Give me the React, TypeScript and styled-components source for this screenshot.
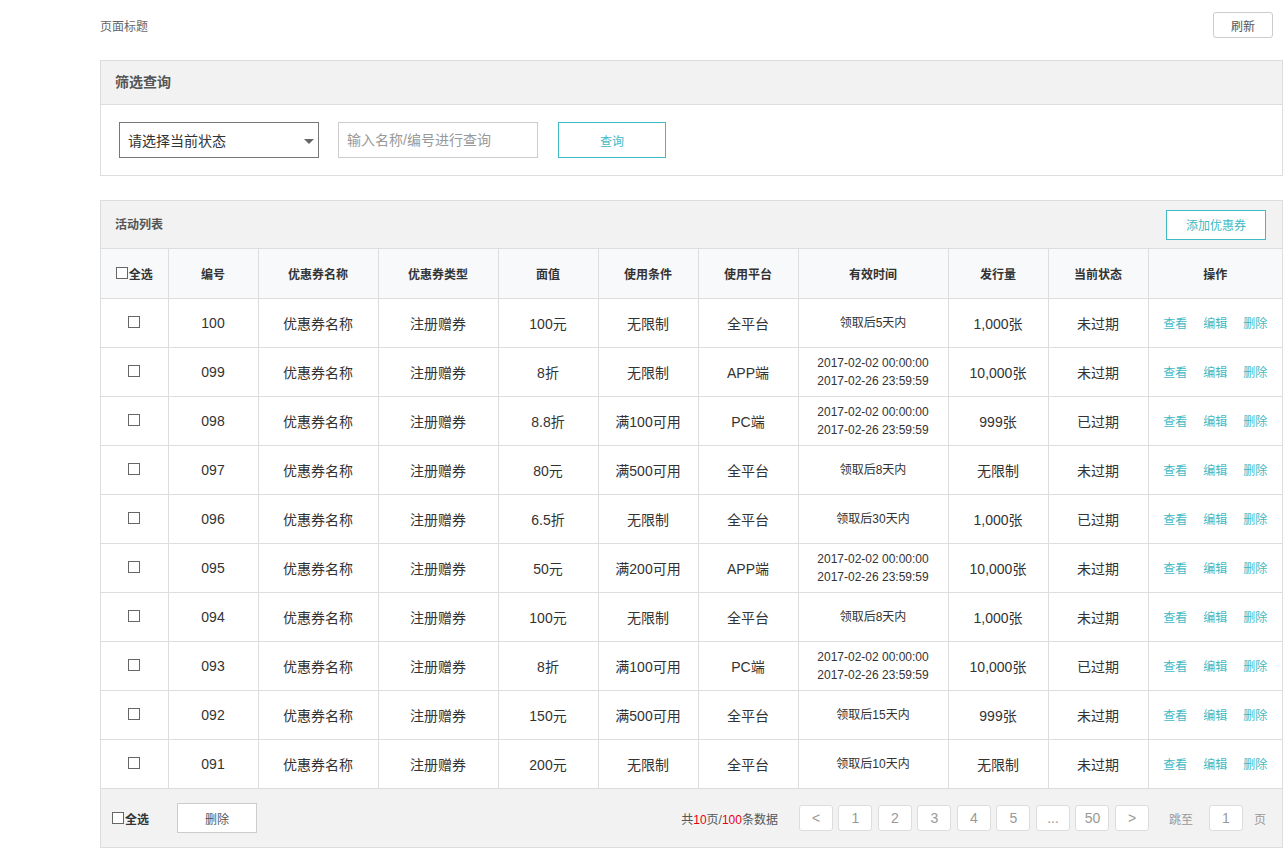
import styled, {createGlobalStyle} from "styled-components";

const TEAL = '#3fbac4'

const GlobalStyle = createGlobalStyle`
  html, body {
    margin: 0;
    padding: 0;
    background: #fff;
  }
  body {
    font-family: "Liberation Sans", "Noto Sans CJK SC", sans-serif;
    color: #333;
  }
  * {
    box-sizing: border-box;
  }
`

const Page = styled.div`
  width: 1283px;
  padding-left: 100px;
`
const TopBar = styled.div`
  display: flex;
  align-items: center;
  justify-content: space-between;
  height: 50px;
  margin-bottom: 10px;
  padding-right: 10px;
`
const PageTitle = styled.div`
  font-size: 12px;
  color: #666;
`
const Button = styled.button<{ $teal?: boolean; $w: number; $h: number; $radius?: number }>`
  width: ${p => p.$w}px;
  height: ${p => p.$h}px;
  padding: 0;
  background: #fff;
  border: 1px solid ${p => p.$teal ? TEAL : '#ccc'};
  border-radius: ${p => p.$radius ?? 0}px;
  color: ${p => p.$teal ? TEAL : '#555'};
  font-family: inherit;
  font-size: 12px;
  cursor: pointer;
`
const Panel = styled.div<{ $gap?: number }>`
  border: 1px solid #ddd;
  margin-bottom: ${p => p.$gap ?? 0}px;
`
const PanelHead = styled.div<{ $h: number }>`
  display: flex;
  align-items: center;
  justify-content: space-between;
  height: ${p => p.$h}px;
  padding: 0 16px 0 14px;
  background: #f2f2f2;
  border-bottom: 1px solid #ddd;
`
const PanelTitle = styled.div<{ $size: number }>`
  font-size: ${p => p.$size}px;
  font-weight: bold;
  color: #555;
  margin-top: -3px;
`
const FilterBody = styled.div`
  display: flex;
  align-items: center;
  gap: 19px;
  padding: 17px 18px;

  button {
    margin-left: 1px;
  }
`
const SelectBox = styled.div`
  position: relative;
  display: flex;
  align-items: center;
  width: 200px;
  height: 36px;
  padding: 0 8px;
  border: 1px solid #777;
  font-size: 14px;
  color: #333;

  &::after {
    content: '';
    position: absolute;
    right: 4px;
    top: 16px;
    border-left: 5px solid transparent;
    border-right: 5px solid transparent;
    border-top: 5px solid #666;
  }
`
const TextInput = styled.input`
  width: 200px;
  height: 36px;
  padding: 0 8px;
  border: 1px solid #ccc;
  outline: none;
  font-family: inherit;
  font-size: 14px;

  &::placeholder {
    color: #999;
  }
`
const Table = styled.table`
  width: 100%;
  border-collapse: collapse;
  table-layout: fixed;
  font-size: 14px;

  th, td {
    border: 1px solid #ddd;
    text-align: center;
    padding: 0;
  }
  tr > :first-child {
    border-left: none;
  }
  tr > :last-child {
    border-right: none;
  }
  thead tr:first-child th {
    border-top: none;
  }
  tbody tr:last-child td {
    border-bottom: none;
  }
`
const HeadRow = styled.tr`
  height: 49px;
  background: #f8f9fb;

  th {
    font-size: 12px;
    font-weight: bold;
    color: #333;
  }
`
const BodyRow = styled.tr`
  height: 49px;
  color: #333;
`
const SmallCell = styled.td`
  font-size: 12px;
  line-height: 18px;
`
const Check = styled.span`
  display: inline-block;
  width: 12px;
  height: 12px;
  border: 1px solid #666;
  background: #fff;
  vertical-align: middle;
`
const CheckLabel = styled.label`
  display: inline-flex;
  align-items: center;
  gap: 1px;
  font-size: 12px;
  font-weight: bold;
  color: #333;
`
const RowCheck = styled(Check)`
  margin-top: -4px;
`
const Actions = styled.div`
  display: flex;
  justify-content: center;
  gap: 16px;
  font-size: 12px;

  a {
    color: ${TEAL};
    text-decoration: none;
  }
`
const Footer = styled.div`
  display: flex;
  align-items: center;
  height: 59px;
  padding: 0 16px 0 11px;
  background: #f2f2f2;
  border-top: 1px solid #ddd;
`
const FooterLeft = styled.div`
  display: flex;
  align-items: center;
  gap: 28px;
`
const Pager = styled.div`
  display: flex;
  align-items: center;
  margin-left: auto;
  font-size: 12px;
  color: #999;
`
const PageInfo = styled.div`
  color: #555;
  margin-right: 21px;

  em {
    font-style: normal;
    color: #e60012;
  }
`
const PageButtons = styled.div`
  display: flex;
  gap: 5.5px;
  margin-right: 20px;
`
const PageBtn = styled.div`
  display: flex;
  align-items: center;
  justify-content: center;
  width: 34px;
  height: 26px;
  background: #fff;
  border: 1px solid #ddd;
  border-radius: 3px;
  color: #999;
  font-size: 14px;
`
const JumpInput = styled(PageBtn)`
  margin: 0 11px 0 16px;
`

type Row = {
    id: string
    value: string
    cond: string
    platform: string
    time: string | [string, string]
    amount: string
    status: string
}

const DATES: [string, string] = ['2017-02-02 00:00:00', '2017-02-26 23:59:59']

const rows: Row[] = [
    {id: '100', value: '100元', cond: '无限制', platform: '全平台', time: '领取后5天内', amount: '1,000张', status: '未过期'},
    {id: '099', value: '8折', cond: '无限制', platform: 'APP端', time: DATES, amount: '10,000张', status: '未过期'},
    {id: '098', value: '8.8折', cond: '满100可用', platform: 'PC端', time: DATES, amount: '999张', status: '已过期'},
    {id: '097', value: '80元', cond: '满500可用', platform: '全平台', time: '领取后8天内', amount: '无限制', status: '未过期'},
    {id: '096', value: '6.5折', cond: '无限制', platform: '全平台', time: '领取后30天内', amount: '1,000张', status: '已过期'},
    {id: '095', value: '50元', cond: '满200可用', platform: 'APP端', time: DATES, amount: '10,000张', status: '未过期'},
    {id: '094', value: '100元', cond: '无限制', platform: '全平台', time: '领取后8天内', amount: '1,000张', status: '未过期'},
    {id: '093', value: '8折', cond: '满100可用', platform: 'PC端', time: DATES, amount: '10,000张', status: '已过期'},
    {id: '092', value: '150元', cond: '满500可用', platform: '全平台', time: '领取后15天内', amount: '999张', status: '未过期'},
    {id: '091', value: '200元', cond: '无限制', platform: '全平台', time: '领取后10天内', amount: '无限制', status: '未过期'},
]

const colWidths = [67, 90, 120, 120, 100, 100, 100, 150, 100, 100]
const headers = ['编号', '优惠券名称', '优惠券类型', '面值', '使用条件', '使用平台', '有效时间', '发行量', '当前状态', '操作']
const pages = ['<', '1', '2', '3', '4', '5', '...', '50', '>']

const App = () => {
    return <Page>
        <GlobalStyle/>
        <TopBar>
            <PageTitle>页面标题</PageTitle>
            <Button $w={60} $h={26} $radius={3}>刷新</Button>
        </TopBar>

        <Panel $gap={24}>
            <PanelHead $h={44}>
                <PanelTitle $size={14}>筛选查询</PanelTitle>
            </PanelHead>
            <FilterBody>
                <SelectBox>请选择当前状态</SelectBox>
                <TextInput placeholder={'输入名称/编号进行查询'}/>
                <Button $teal $w={108} $h={36}>查询</Button>
            </FilterBody>
        </Panel>

        <Panel>
            <PanelHead $h={48}>
                <PanelTitle $size={12}>活动列表</PanelTitle>
                <Button $teal $w={100} $h={30}>添加优惠券</Button>
            </PanelHead>
            <Table>
                <colgroup>
                    {colWidths.map((w, i) => <col key={i} style={{width: w}}/>)}
                    <col/>
                </colgroup>
                <thead>
                <HeadRow>
                    <th><CheckLabel><Check/>全选</CheckLabel></th>
                    {headers.map(h => <th key={h}>{h}</th>)}
                </HeadRow>
                </thead>
                <tbody>
                {rows.map(r =>
                    <BodyRow key={r.id}>
                        <td><RowCheck/></td>
                        <td>{r.id}</td>
                        <td>优惠券名称</td>
                        <td>注册赠券</td>
                        <td>{r.value}</td>
                        <td>{r.cond}</td>
                        <td>{r.platform}</td>
                        <SmallCell>
                            {typeof r.time === 'string' ? r.time : <>{r.time[0]}<br/>{r.time[1]}</>}
                        </SmallCell>
                        <td>{r.amount}</td>
                        <td>{r.status}</td>
                        <td>
                            <Actions>
                                <a href="#">查看</a>
                                <a href="#">编辑</a>
                                <a href="#">删除</a>
                            </Actions>
                        </td>
                    </BodyRow>
                )}
                </tbody>
            </Table>
            <Footer>
                <FooterLeft>
                    <CheckLabel><Check/>全选</CheckLabel>
                    <Button $w={80} $h={30}>删除</Button>
                </FooterLeft>
                <Pager>
                    <PageInfo>共<em>10</em>页/<em>100</em>条数据</PageInfo>
                    <PageButtons>
                        {pages.map((p, i) => <PageBtn key={i}>{p}</PageBtn>)}
                    </PageButtons>
                    <span>跳至</span>
                    <JumpInput>1</JumpInput>
                    <span>页</span>
                </Pager>
            </Footer>
        </Panel>
    </Page>
}

export default App
